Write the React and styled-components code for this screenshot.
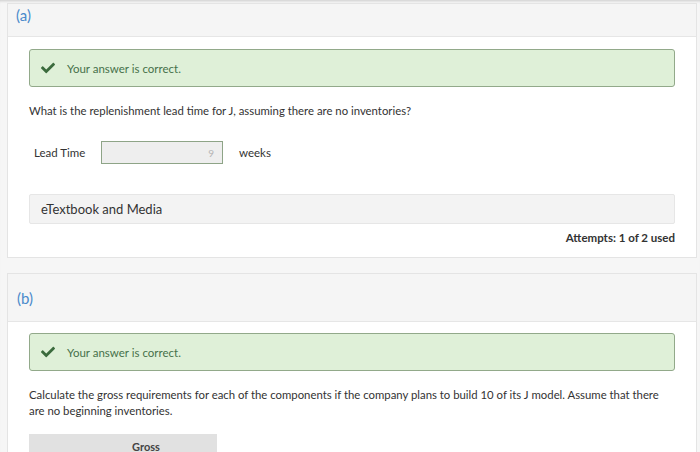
import styled, { createGlobalStyle } from "styled-components";
import { FaCheck } from "react-icons/fa";

const GlobalStyle = createGlobalStyle`
  html, body {
    margin: 0;
    padding: 0;
    background: #f6f6f6;
    font-family: Lato, "Open Sans", "Liberation Sans", sans-serif;
    color: #333;
  }
`;

const Page = styled.div`
  width: 700px;
  height: 452px;
  overflow: hidden;
  box-sizing: border-box;
  padding: 3px 3px 0 7px;
  box-shadow: inset 0 3px 3px -2px rgba(0, 0, 0, 0.18);
`;

const Card = styled.section`
  background: #fff;
  border: 1px solid #e4e4e4;
  margin-bottom: 15px;
`;

const CardHeader = styled.div`
  display: flex;
  align-items: ${(p) => (p.$tall ? "center" : "flex-start")};
  height: ${(p) => p.$height}px;
  box-sizing: border-box;
  padding: ${(p) => (p.$tall ? "0 9px" : "2px 8px")};
  background: #f5f5f5;
  border-bottom: 1px solid #e6e6e6;
  color: #4a8acb;
  font-size: 15px;
`;

const CardBody = styled.div`
  padding: ${(p) => p.$top}px 21px 0;
`;

const Alert = styled.div`
  display: flex;
  align-items: center;
  gap: 12px;
  height: 38px;
  box-sizing: border-box;
  padding: 0 11px;
  background: #dff0d8;
  border: 1px solid #92a98a;
  border-radius: 3px;
  color: #46704a;
  font-size: 11.5px;
  svg {
    color: #3b6b3d;
    font-size: 14px;
  }
`;

const Question = styled.p`
  margin: ${(p) => p.$top}px 0 0;
  font-size: 11.35px;
  line-height: 16px;
  color: #333;
`;

const FieldRow = styled.div`
  display: flex;
  align-items: center;
  margin-top: 22px;
  padding-left: 5px;
  font-size: 11.5px;
`;

const FieldLabel = styled.span`
  width: 67px;
`;

const NumberBox = styled.div`
  width: 122px;
  height: 23px;
  box-sizing: border-box;
  display: flex;
  align-items: center;
  justify-content: flex-end;
  padding-right: 8px;
  background: #eeeeee;
  border: 1px solid #8ea487;
  color: #b5b5b5;
  font-size: 10px;
`;

const Unit = styled.span`
  margin-left: 16px;
`;

const MediaBar = styled.div`
  margin-top: 30px;
  height: 30px;
  box-sizing: border-box;
  display: flex;
  align-items: center;
  padding-left: 11px;
  background: #f3f3f3;
  border: 1px solid #e6e6e6;
  border-radius: 2px;
  font-size: 13px;
  color: #333;
`;

const Attempts = styled.div`
  text-align: right;
  font-weight: 700;
  font-size: 11.5px;
  margin-top: 7px;
  padding-bottom: 13px;
`;

const TableHead = styled.div`
  margin-top: 15px;
  width: 188px;
  height: 24px;
  background: #e1e1e1;
  display: flex;
  justify-content: center;
  padding: 6px 0 0 46px;
  box-sizing: border-box;
  font-size: 11px;
  font-weight: 700;
  color: #444;
`;

const CorrectAlert = () => (
  <Alert>
    <FaCheck />
    <span>Your answer is correct.</span>
  </Alert>
);

export default function App() {
  return (
    <>
      <GlobalStyle />
      <Page>
        <Card>
          <CardHeader $height={33}>(a)</CardHeader>
          <CardBody $top={12}>
            <CorrectAlert />
            <Question $top={16}>What is the replenishment lead time for J, assuming there are no inventories?</Question>
            <FieldRow>
              <FieldLabel>Lead Time</FieldLabel>
              <NumberBox>9</NumberBox>
              <Unit>weeks</Unit>
            </FieldRow>
            <MediaBar>eTextbook and Media</MediaBar>
            <Attempts>Attempts: 1 of 2 used</Attempts>
          </CardBody>
        </Card>
        <Card>
          <CardHeader $height={48} $tall>(b)</CardHeader>
          <CardBody $top={11}>
            <CorrectAlert />
            <Question $top={16}>
              Calculate the gross requirements for each of the components if the company plans to build 10 of its J model. Assume that there are no beginning inventories.
            </Question>
            <TableHead>Gross</TableHead>
          </CardBody>
        </Card>
      </Page>
    </>
  );
}
